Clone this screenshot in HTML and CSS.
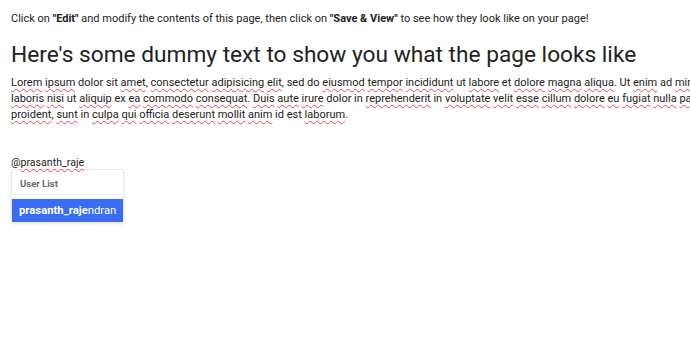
FILE: index.html
```html
<!DOCTYPE html>
<html>
    <head>
        <meta charset="UTF-8">
        <meta name="viewport" content="width = device-width, initial-scale = 1.0">
        <title>Dummy page</title>
        <link rel="stylesheet" href="styles.css">
    </head>

    <body>
        <div class="page">
            <p class="intro">Click on <b>"Edit"</b> and modify the contents of this page, then click on <b>"Save &amp; View"</b> to see how they look like on your page!</p>

            <h1>Here's some dummy text to show you what the page looks like</h1>

            <!--   lorem block, spellcheck marks on unknown words   -->
            <p class="lorem">
                <span class="sp">Lorem</span> <span class="sp">ipsum</span> dolor sit <span class="sp">amet</span>, <span class="sp">consectetur</span> <span class="sp">adipisicing</span> <span class="sp">elit</span>, sed do <span class="sp">eiusmod</span> <span class="sp">tempor</span> <span class="sp">incididunt</span> ut <span class="sp">labore</span> et <span class="sp">dolore</span> <span class="sp">magna</span> <span class="sp">aliqua</span>. Ut <span class="sp">enim</span> ad <span class="sp">minim</span> <span class="sp">veniam</span>, <span class="sp">quis</span> <span class="sp">nostrud</span> <span class="sp">exercitation</span> <span class="sp">ullamco</span><br>
                <span class="sp">laboris</span> <span class="sp">nisi</span> ut <span class="sp">aliquip</span> ex <span class="sp">ea</span> <span class="sp">commodo</span> <span class="sp">consequat</span>. <span class="sp">Duis</span> <span class="sp">aute</span> <span class="sp">irure</span> dolor in <span class="sp">reprehenderit</span> in <span class="sp">voluptate</span> <span class="sp">velit</span> <span class="sp">esse</span> <span class="sp">cillum</span> <span class="sp">dolore</span> <span class="sp">eu</span> <span class="sp">fugiat</span> <span class="sp">nulla</span> <span class="sp">pariatur</span>. <span class="sp">Excepteur</span> sint <span class="sp">occaecat</span> <span class="sp">cupidatat</span> non<br>
                <span class="sp">proident</span>, <span class="sp">sunt</span> in <span class="sp">culpa</span> <span class="sp">qui</span> <span class="sp">officia</span> <span class="sp">deserunt</span> <span class="sp">mollit</span> <span class="sp">anim</span> id est <span class="sp">laborum</span>.
            </p>

            <div class="mention">
                <div class="typed">@<span class="sp">prasanth_raje</span></div>
                <div class="menu">
                    <div class="menu-head">User List</div>
                    <div class="menu-item active"><b>prasanth_raje</b>ndran</div>
                </div>
            </div>
        </div>
    </body>
</html>
```

FILE: styles.css
```css
html, body {
  margin: 0;
  background: #fff;
  overflow: hidden;
}

.page {
  padding: 11px 11px;
  font-family: Roboto, "Liberation Sans", sans-serif;
  color: #222;
}

.intro {
  margin: 0 0 13px 0;
  font-size: 11px;
  line-height: 16px;
}

.intro b {
  font-weight: 700;
}

h1 {
  margin: 0 0 5px 0;
  font-size: 22.7px;
  font-weight: 400;
  line-height: 30px;
}

.lorem {
  margin: 0;
  font-size: 11px;
  line-height: 16px;
  white-space: nowrap;
}

.sp {
  text-decoration: underline wavy #e8494f;
  text-decoration-thickness: 1px;
  text-underline-offset: 2px;
}

.mention {
  margin-top: 34px;
  font-size: 10.6px;
}

.typed {
  line-height: 12px;
}

.menu {
  width: 111px;
  background: #fff;
  border: 1px solid #e8e8e8;
  border-radius: 2px;
  box-shadow: 0 1px 3px rgba(0,0,0,0.1);
}

.menu-head {
  margin: 0 3px;
  padding: 8px 5px 4px;
  font-size: 9.5px;
  line-height: 12px;
  font-weight: 700;
  color: #6a6a6a;
  border-bottom: 1px solid #eee;
}

.menu-item {
  margin-top: 4px;
  padding: 4px 7px;
  font-size: 11.3px;
  line-height: 15px;
  white-space: nowrap;
}

.menu-item.active {
  background: #3a6cf4;
  color: #fff;
}
```
